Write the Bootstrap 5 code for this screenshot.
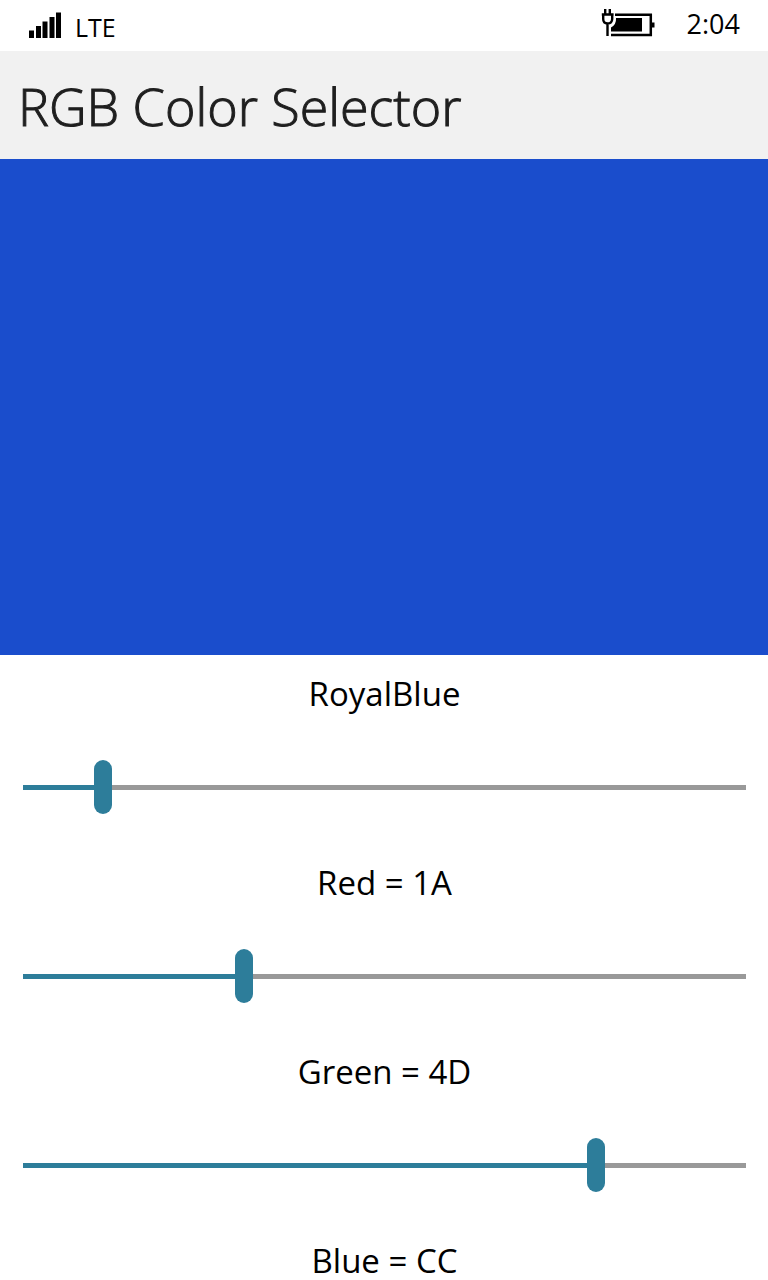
<!DOCTYPE html>
<html lang="en">
<head>
<meta charset="utf-8">
<meta name="viewport" content="width=device-width, initial-scale=1">
<title>RGB Color Selector</title>
<link href="https://cdn.jsdelivr.net/npm/bootstrap@5.3.0/dist/css/bootstrap.min.css" rel="stylesheet">
<style>
body { font-family: "Open Sans", "Noto Sans", sans-serif; color: #000; background: #fff; }
.status-bar { height: 51px; padding: 0 28px; line-height: 32px; }
.network { font-size: 25px; padding-top: 11px; }
.clock { font-size: 27px; padding-top: 8px; margin-left: 32px; }
.signal-icon { margin: 12px 13px 0 0; }
.battery-icon { margin-top: 8px; }
.title-bar { background: #f1f1f1; padding: 19px 18px 17px; }
.title-bar h1 { font-size: 52px; font-weight: 300; line-height: 72px; color: #1f1f1f; -webkit-text-stroke: 1px #1f1f1f; }
.swatch { background: #1a4dcc; min-height: 200px; }
.controls { padding: 20px 22px 0 23px; }
.value-label { font-size: 33px; line-height: 38px; }
.color-range { height: 54px; margin: 47px 0 50px; background: none; appearance: none; -webkit-appearance: none; display: block; }
.color-range::-webkit-slider-runnable-track {
  height: 5px; border-radius: 0;
  background: linear-gradient(to right, #2d7d9a var(--fill), #999 var(--fill));
}
.color-range::-webkit-slider-thumb {
  -webkit-appearance: none; width: 18px; height: 54px; margin-top: -25px;
  border: 0; border-radius: 9px; background: #2d7d9a; box-shadow: none;
}
</style>
</head>
<body>
<div class="d-flex flex-column min-vh-100">
  <div class="status-bar d-flex align-items-start">
    <svg class="signal-icon" width="34" height="26" viewBox="0 0 34 26" aria-hidden="true">
      <path d="M1 18.500h5V26H1zM8 14h5v12H8zM14.500 9.500h5V26h-5zM21.500 5h5v21h-5zM28 .6h5V26h-5z"/>
    </svg>
    <span class="network">LTE</span>
    <svg class="battery-icon ms-auto" width="54" height="30" viewBox="0 0 54 30" aria-hidden="true">
      <path d="M14 6.700H49.800V27H10" fill="none" stroke="#000" stroke-width="2.500"/>
      <path d="M15 10H41V23.500H10V19.500Q15.500 16.500 15 10zM50 14.500h3.500v5H50z"/>
      <path d="M4.200 1v6M8.800 1v6M.8 6.500h11.800M2.200 6v5q0 4.500 4.400 4.500T11.200 11V6M6.500 15v13" fill="none" stroke="#000" stroke-width="2.400"/>
    </svg>
    <time class="clock">2:04</time>
  </div>
  <header class="title-bar"><h1 class="m-0">RGB Color Selector</h1></header>
  <div class="swatch flex-grow-1"></div>
  <main class="controls text-center">
    <div class="value-label">RoyalBlue</div>
    <input type="range" class="form-range color-range p-0" id="red" min="0" max="1" step="any" value="0.1" style="--fill: 10%">
    <label for="red" class="value-label d-block">Red = 1A</label>
    <input type="range" class="form-range color-range p-0" id="green" min="0" max="1" step="any" value="0.3" style="--fill: 30%">
    <label for="green" class="value-label d-block">Green = 4D</label>
    <input type="range" class="form-range color-range p-0" id="blue" min="0" max="1" step="any" value="0.8" style="--fill: 80%">
    <label for="blue" class="value-label d-block">Blue = CC</label>
  </main>
</div>
<script src="https://cdn.jsdelivr.net/npm/bootstrap@5.3.0/dist/js/bootstrap.bundle.min.js"></script>
</body>
</html>
